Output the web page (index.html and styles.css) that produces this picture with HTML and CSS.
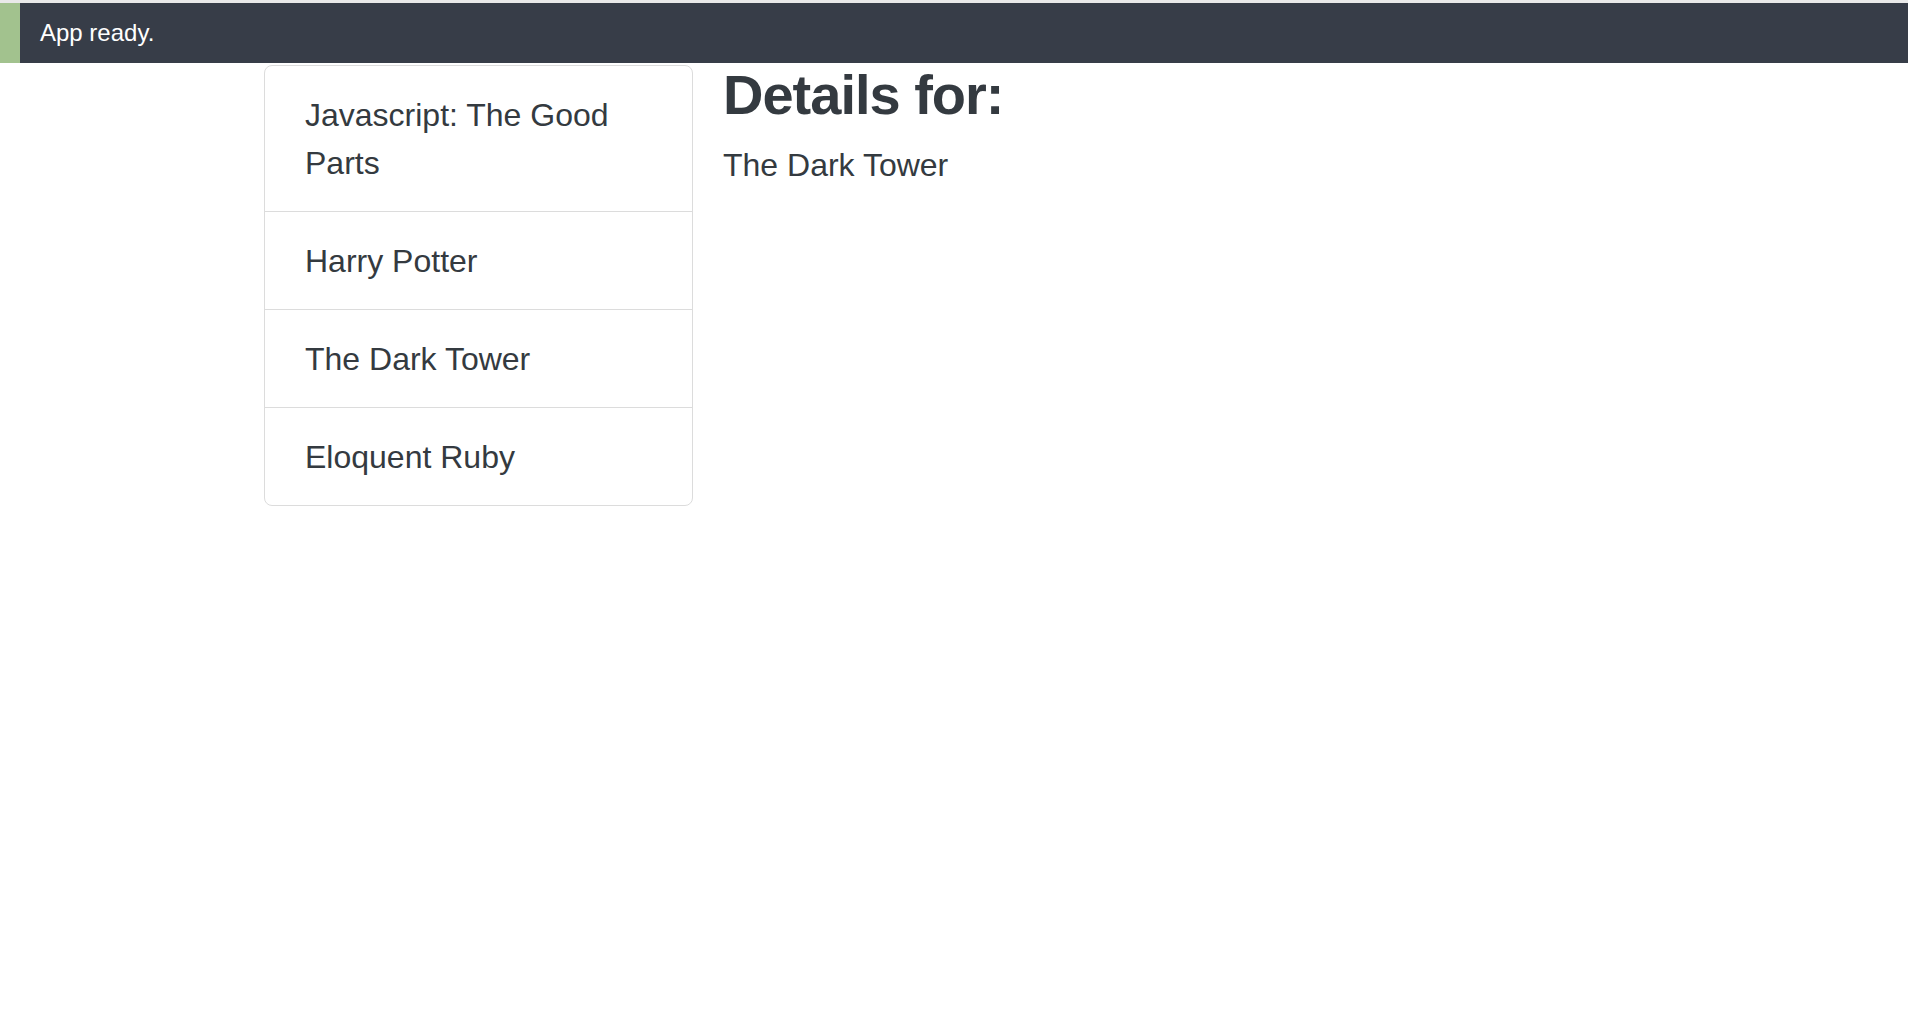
FILE: index.html
```html
<!DOCTYPE html>
<html lang="en">
<head>
<meta charset="utf-8">
<title>Books</title>
<link rel="stylesheet" href="styles.css">
</head>
<body>
  <div class="topline"></div>
  <header class="statusbar">
    <div class="status-accent"></div>
    <div class="status-text">App ready.</div>
  </header>
  <main class="container">
    <ul class="book-list">
      <li class="book-item">Javascript: The Good Parts</li>
      <li class="book-item">Harry Potter</li>
      <li class="book-item">The Dark Tower</li>
      <li class="book-item">Eloquent Ruby</li>
    </ul>
    <section class="details">
      <h1 class="details-title">Details for:</h1>
      <p class="details-name">The Dark Tower</p>
    </section>
  </main>
</body>
</html>
```

FILE: styles.css
```css
html, body {
  margin: 0;
  padding: 0;
  background: #ffffff;
}

body {
  font-family: "Liberation Sans", Arial, Helvetica, sans-serif;
  color: #343a40;
}

.topline {
  height: 3px;
  background: #e9e9e9;
}

.statusbar {
  display: flex;
  align-items: center;
  height: 60px;
  background: #373d48;
}

.status-accent {
  width: 20px;
  align-self: stretch;
  background: #a2c28e;
}

.status-text {
  margin-left: 20px;
  color: #ffffff;
  font-size: 24px;
  line-height: 1;
}

.container {
  display: flex;
  align-items: flex-start;
  gap: 30px;
  padding-left: 264px;
}

.book-list {
  list-style: none;
  margin: 2px 0 0 0;
  padding: 0;
  width: 429px;
  box-sizing: border-box;
  border: 1px solid #dcdcdc;
  border-radius: 8px;
}

.book-item {
  padding: 24.5px 40px;
  font-size: 32px;
  line-height: 48px;
  color: #343a40;
  border-top: 1px solid #dcdcdc;
}

.book-item:first-child {
  border-top: none;
}

.details {
  flex: 1;
}

.details-title {
  margin: 0 0 15px 0;
  font-size: 56px;
  font-weight: 700;
  letter-spacing: -1px;
  line-height: 63px;
  color: #343a40;
}

.details-name {
  margin: 0;
  font-size: 32px;
  line-height: 48px;
  color: #343a40;
}
```
